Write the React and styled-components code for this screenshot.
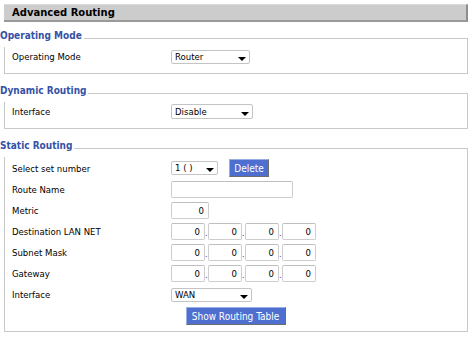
import React from "react";
import styled, { createGlobalStyle } from "styled-components";

const GlobalStyle = createGlobalStyle`
  body {
    margin: 0;
    background: #fff;
    color: #000;
    font-family: "DejaVu Sans Condensed", "DejaVu Sans", sans-serif;
    font-size: 9.5px;
  }
`;

const Page = styled.div`
  width: 464px;
  padding: 4px 6px 0 4px;
`;

const TitleBar = styled.div`
  height: 15px;
  line-height: 15px;
  padding-left: 8px;
  background: #cccccc;
  border-top: 1px solid #dadada;
  border-right: 2px solid #8e8e8e;
  border-bottom: 2px solid #9a9a9a;
  font-family: "DejaVu Sans", sans-serif;
  font-size: 10px;
  font-weight: bold;
`;

const Group = styled.fieldset`
  margin: ${(p) => (p.$first ? 8 : 11)}px 0 0 0;
  padding: ${(p) => p.$pt || 1}px 8px ${(p) => p.$pb || 8}px 7px;
  border: 1px solid #c9c9c9;
  min-width: 0;
`;

const Legend = styled.legend`
  margin-left: -12px;
  padding: 0 2px 5px 0;
  line-height: 12px;
  background: #fff;
  color: #3552a6;
  font-size: 10px;
  font-weight: bold;
`;

const Rows = styled.div`
  display: flex;
  flex-direction: column;
  gap: 4px;
`;

const Row = styled.div`
  display: flex;
  align-items: center;
  justify-content: ${(p) => (p.$center ? "center" : "flex-start")};
  min-height: 17px;
`;

const Label = styled.div`
  flex: none;
  width: 159px;
`;

const Select = styled.div`
  box-sizing: border-box;
  display: flex;
  justify-content: space-between;
  align-items: center;
  width: ${(p) => p.$w}px;
  height: ${(p) => p.$h || 14}px;
  padding: 0 3px 0 3px;
  background: #fff;
  border: 1px solid #c4c4c4;
  border-radius: 2px;
  line-height: 12px;
`;

const Arrow = styled.span`
  align-self: flex-end;
  margin-bottom: 2px;
  width: 0;
  height: 0;
  border-left: 4px solid transparent;
  border-right: 4px solid transparent;
  border-top: 4px solid #000;
`;

const Input = styled.input`
  box-sizing: border-box;
  width: ${(p) => p.$w}px;
  height: 17px;
  margin: 0;
  padding: 0 4px;
  border: 1px solid #cdcdcd;
  border-top-color: #bfbfbf;
  border-radius: 2px;
  background: #fff;
  font: inherit;
  color: #000;
  text-align: right;
  outline: none;
`;

const Dot = styled.span`
  width: 3px;
  align-self: flex-end;
  line-height: 14px;
  color: #6a2a7a;
  font-size: 9px;
`;

const IpGroup = styled.div`
  display: flex;
  align-items: center;
`;

const Button = styled.button`
  box-sizing: border-box;
  width: ${(p) => p.$w}px;
  height: 18px;
  margin: 0 0 0 ${(p) => p.$ml || 0}px;
  padding: 0;
  background: #4e6fcf;
  border: 1px solid;
  border-color: #9aaee6 #6d6d6d #6d6d6d #9aaee6;
  color: #fff;
  font: inherit;
  font-size: 10px;
`;

function Ip() {
  return (
    <IpGroup>
      <Input $w={34} defaultValue="0" readOnly />
      <Dot>.</Dot>
      <Input $w={34} defaultValue="0" readOnly />
      <Dot>.</Dot>
      <Input $w={34} defaultValue="0" readOnly />
      <Dot>.</Dot>
      <Input $w={34} defaultValue="0" readOnly />
    </IpGroup>
  );
}

export default function App() {
  return (
    <Page>
      <GlobalStyle />
      <TitleBar>Advanced Routing</TitleBar>

      <Group $first>
        <Legend>Operating Mode</Legend>
        <Row>
          <Label>Operating Mode</Label>
          <Select $w={79}>
            Router
            <Arrow />
          </Select>
        </Row>
      </Group>

      <Group>
        <Legend>Dynamic Routing</Legend>
        <Row>
          <Label>Interface</Label>
          <Select $w={82} $h={15}>
            Disable
            <Arrow />
          </Select>
        </Row>
      </Group>

      <Group $pt={2} $pb={6}>
        <Legend>Static Routing</Legend>
        <Rows>
          <Row>
            <Label>Select set number</Label>
            <Select $w={47}>
              1 ( )
              <Arrow />
            </Select>
            <Button $w={40} $ml={11}>Delete</Button>
          </Row>
          <Row>
            <Label>Route Name</Label>
            <Input $w={122} defaultValue="" readOnly />
          </Row>
          <Row>
            <Label>Metric</Label>
            <Input $w={38} defaultValue="0" readOnly />
          </Row>
          <Row>
            <Label>Destination LAN NET</Label>
            <Ip />
          </Row>
          <Row>
            <Label>Subnet Mask</Label>
            <Ip />
          </Row>
          <Row>
            <Label>Gateway</Label>
            <Ip />
          </Row>
          <Row>
            <Label>Interface</Label>
            <Select $w={81}>
              WAN
              <Arrow />
            </Select>
          </Row>
          <Row $center>
            <Button $w={100}>Show Routing Table</Button>
          </Row>
        </Rows>
      </Group>
    </Page>
  );
}
